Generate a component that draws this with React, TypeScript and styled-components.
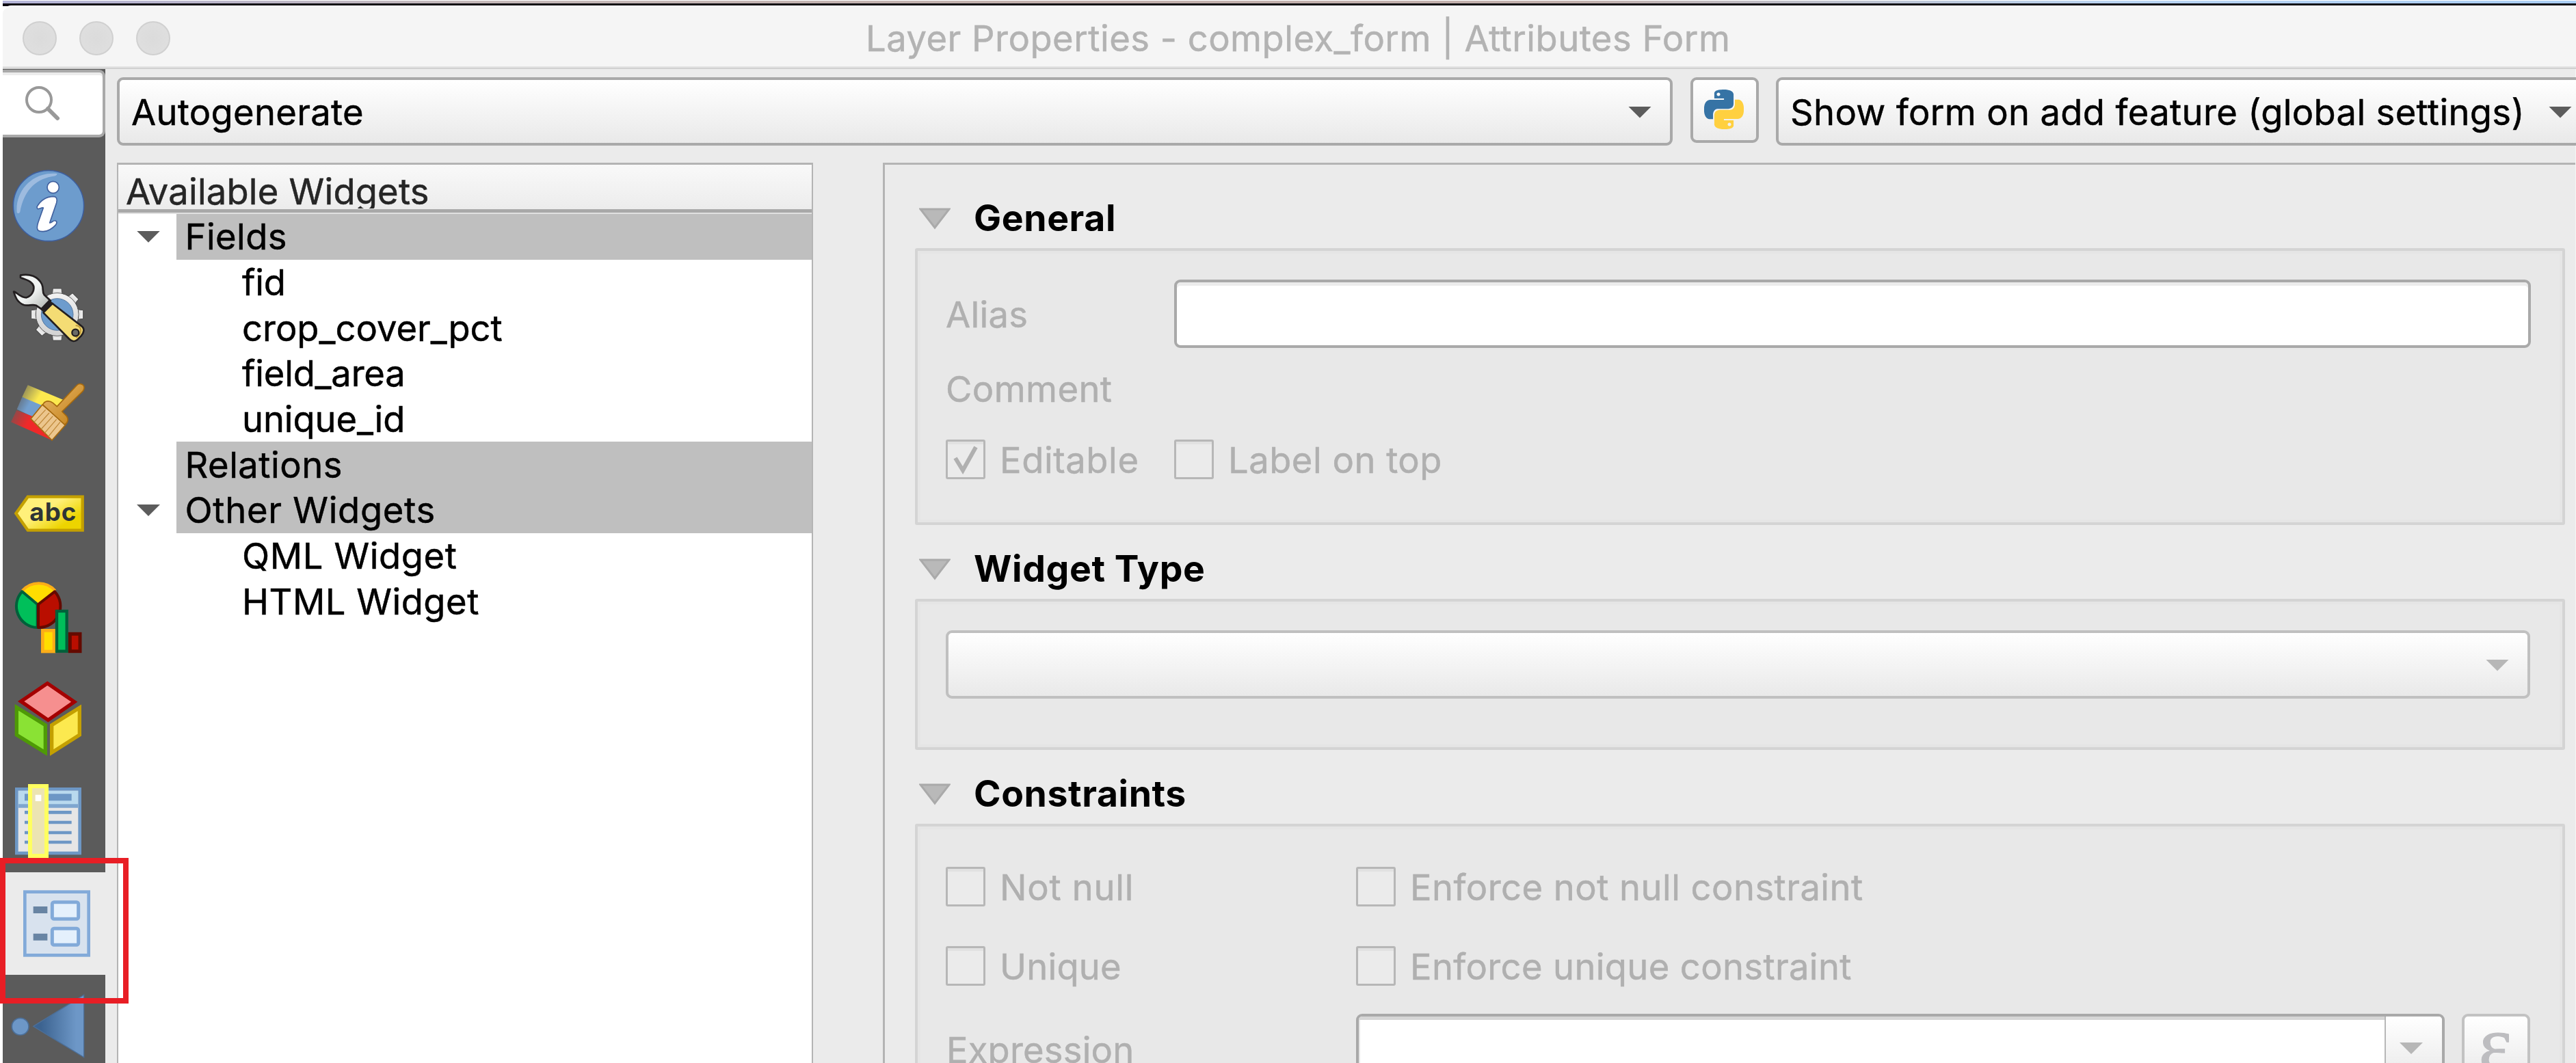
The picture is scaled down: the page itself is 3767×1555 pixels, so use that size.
import React from "react";
import styled, { createGlobalStyle } from "styled-components";

const Global = createGlobalStyle`
  html, body { margin: 0; padding: 0; background: #fff; }
  * { box-sizing: border-box; }
`;

const Screen = styled.div`
  position: relative;
  width: 3767px;
  height: 1555px;
  overflow: hidden;
  padding-left: 4px;
  background: #fff;
  font-family: Inter, "Liberation Sans", sans-serif;
  font-size: 52.5px;
  color: #000;
  display: flex;
  flex-direction: column;
  white-space: nowrap;
`;

const Desktop = styled.div`
  flex: none;
  height: 9px;
  margin-bottom: -1px;
  background: linear-gradient(#fff 0 1px, transparent 1px 5px, #0d0a12 5px),
    linear-gradient(90deg, #b3b4d8 0, #c4b8b8 700px, #c2b0ac 1500px, #c2b0ac 2300px, #b9d4f2 3100px, #a9cdf3);
`;

const TitleBar = styled.header`
  flex: none;
  height: 93px;
  display: flex;
  align-items: center;
  padding: 2px 0 0 29px;
  background: #f5f5f5;
  border-top: 2px solid #fff;
  border-bottom: 2px solid #d0d0d0;
  box-shadow: inset 0 -2px 0 #e3e3e3;
  border-radius: 12px 0 0 0;
`;

const Lights = styled.div`
  display: flex;
  gap: 33px;
  width: 1233px;
`;

const Light = styled.span`
  width: 50px;
  height: 50px;
  border-radius: 50%;
  background: radial-gradient(#dbdbdb, #e0e0e0);
  border: 2px solid #d0d0d0;
`;

const Text = styled.span<{ $ls?: number; $color?: string; $drop?: number }>`
  letter-spacing: ${(p) => p.$ls ?? 0}px;
  color: ${(p) => p.$color ?? "#000"};
  -webkit-text-stroke: 0.5px currentColor;
  line-height: 64px;
  padding-top: ${(p) => p.$drop ?? 0}px;
`;

const Body = styled.div`
  flex: 1;
  min-height: 0;
  display: flex;
`;

const Sidebar = styled.nav`
  flex: none;
  width: 150px;
  background: #5b5b5b;
`;

const SearchBox = styled.div`
  margin-top: 1px;
  margin-bottom: 25px;
  height: 99px;
  background: #fff;
  border: 4px solid #a9a9a9;
  border-left: 0;
  border-radius: 0 9px 9px 0;
  box-shadow: inset 0 4px 0 #ececec;
`;

const Slot = styled.div<{ $active?: boolean }>`
  height: 150px;
  background: ${(p) => (p.$active ? "#ebebeb" : "transparent")};
  svg { display: block; }
`;

const Content = styled.main`
  flex: 1;
  min-width: 0;
  display: flex;
  flex-direction: column;
  background: #ebebeb;
  padding: 12px 0 0 17px;
  border-right: 1px solid #f6f6f6;
`;

const TopRow = styled.div`
  flex: none;
  height: 100px;
  display: flex;
  align-items: flex-start;
`;

const Combo = styled.div<{ $w: number; $muted?: boolean }>`
  flex: none;
  width: ${(p) => p.$w}px;
  height: 100px;
  display: flex;
  align-items: center;
  justify-content: space-between;
  padding: 2px 27px 0 17px;
  border: 4px solid ${(p) => (p.$muted ? "#c0c0c0" : "#a9a9a9")};
  border-radius: 9px;
  background: linear-gradient(#fff, #e9e9e9);
`;

const Down = styled.i<{ $muted?: boolean }>`
  flex: none;
  width: 34px;
  height: 17px;
  clip-path: polygon(0 0, 100% 0, 50% 100%);
  background: ${(p) => (p.$muted ? "#b7b7b7" : "#5c5c5c")};
`;

const PyButton = styled.button`
  flex: none;
  width: 100px;
  height: 96px;
  margin: 0 25px 0 26px;
  padding: 0 2px 3px 0;
  display: grid;
  place-items: center;
  border: 4px solid #a9a9a9;
  border-radius: 9px;
  background: linear-gradient(#fff, #ebebeb);
`;

const Panes = styled.div`
  flex: 1;
  min-height: 0;
  display: flex;
  gap: 102px;
  padding-top: 25px;
`;

const Tree = styled.section`
  flex: none;
  width: 1018px;
  background: #fff;
  border: solid #b4b4b4;
  border-width: 3px 2px 0 2px;
`;

const TreeHeader = styled.div`
  height: 72px;
  padding: 7px 0 0 11px;
  overflow: hidden;
  line-height: 64px;
  border-bottom: 2px solid #e0e0e0;
  background: linear-gradient(#a9a9a9, #a9a9a9) 0 65px / 100% 5px no-repeat,
    linear-gradient(#f9f9f9, #ebebeb);
`;

const HeaderClip = styled.div`
  height: 57px;
  overflow: hidden;
`;

const Row = styled.div`
  height: 66.7px;
  display: flex;
  align-items: center;
`;

const Twisty = styled.span`
  width: 85px;
  padding: 0 0 0 27px;
  display: flex;
`;

const RowLabel = styled.div<{ $group?: boolean }>`
  flex: 1;
  height: 100%;
  display: flex;
  align-items: center;
  padding-left: ${(p) => (p.$group ? 12.5 : 96)}px;
  background: ${(p) => (p.$group ? "#bfbfbf" : "transparent")};
`;

const FormPane = styled.section`
  flex: 1;
  min-width: 0;
  padding: 46px 15px 0 44px;
  border: solid #b4b4b4;
  border-width: 3px 0 0 3px;
`;

const GroupTitle = styled.h3`
  margin: 0;
  height: 76px;
  padding-left: 6px;
  display: flex;
  align-items: flex-start;
  gap: 34px;
  font-size: 53.5px;
  font-weight: 700;
  line-height: 64px;
  letter-spacing: 0.6px;
  svg { margin-top: 17px; }
`;

const Group = styled.div<{ $h: number }>`
  height: ${(p) => p.$h}px;
  margin-bottom: 32px;
  padding: 42px 46px 0 41px;
  border: 4px solid #d4d4d4;
  border-radius: 3px;
  background: #e8e8e8;
  box-shadow: inset 0 0 0 4px #e5e5e5;
`;

const FieldRow = styled.div<{ $h: number; $col: number }>`
  height: ${(p) => p.$h}px;
  display: grid;
  grid-template-columns: ${(p) => p.$col}px 1fr;
  align-items: center;
`;

const Input = styled.div`
  height: 100px;
  background: #fff;
  border: 4px solid #a9a9a9;
  border-radius: 9px;
  box-shadow: inset 0 5px 0 #ececec;
`;

const Check = styled.label`
  display: flex;
  align-items: center;
  gap: 21px;
`;

const Box = styled.span`
  width: 58px;
  height: 58px;
  border: 3.5px solid #b7b7b7;
  border-radius: 3px;
  background: #ebebeb;
  box-shadow: inset 0 4px 0 #e1e1e1;
  svg { display: block; }
`;

const ExprRow = styled.div`
  display: grid;
  grid-template-columns: 600px 1592px 100px;
  align-items: start;
`;

const ExprLabel = styled.div`
  padding: 21px 0 0 1px;
`;

const ExprCombo = styled.div`
  height: 100px;
  display: flex;
  background: #fff;
  border: 4px solid #a9a9a9;
  border-radius: 9px;
  overflow: hidden;
`;

const ExprValue = styled.div`
  flex: 1;
  border-right: 2px solid #b7b7b7;
  box-shadow: inset 0 5px 0 #d6d6d6, inset 2px 0 0 #e6e6e6;
`;

const ExprDrop = styled.div`
  width: 82px;
  padding: 38px 0 0 20px;
  background: linear-gradient(#fff, #e9e9e9);
`;

const Epsilon = styled.button`
  width: 100px;
  height: 100px;
  margin-left: 25px;
  padding: 0 2px 12px 0;
  border: 4px solid #c2c2c2;
  border-radius: 9px;
  background: linear-gradient(#fff, #e9e9e9);
  font: 400 116px/60px "Liberation Serif", serif;
  -webkit-text-stroke: 1px currentColor;
  color: #bdbdc0;
`;

const Highlight = styled.div`
  position: absolute;
  left: 0;
  top: 1255px;
  width: 188px;
  height: 213px;
  border: 8px solid #e81e25;
`;

const MUTED = "#b0b0b0";

/* Each icon is drawn in thirds of a pixel inside its 150px slot. */
const Icon = ({ y, children }: { y: number; children: React.ReactNode }) => (
  <svg width="150" height="150" viewBox={`12 ${y} 450 450`}>{children}</svg>
);

const InfoIcon = () => (
  <Icon y={408}>
    <circle cx="213" cy="633" r="155" fill="#6d9ccd" stroke="#3e5f9e" strokeWidth="5" />
    <path d="M74 662C66 570 140 482 250 492C252 500 240 504 226 505C150 520 104 572 88 660C84 668 77 668 74 662Z" fill="#9dbbdf" />
    <circle cx="233" cy="552" r="26" fill="#fff" stroke="#41619f" strokeWidth="5" />
    <path d="M162 638C176 612 198 594 232 592C250 592 252 606 248 620L218 708C228 708 236 692 246 700C256 710 236 728 218 738C200 748 178 748 168 742C158 732 164 716 168 704L190 642C180 640 172 650 164 646Z" fill="#fff" stroke="#41619f" strokeWidth="5" strokeLinejoin="round" />
  </Icon>
);

const GearIcon = () => (
  <Icon y={858}>
    <defs>
      <linearGradient id="gear" x1="0" y1="0" x2="0" y2="1">
        <stop offset="0" stopColor="#f2f2f2" />
        <stop offset="1" stopColor="#d2d2d2" />
      </linearGradient>
      <linearGradient id="steel" x1="0" y1="0" x2="1" y2="1">
        <stop offset=".5" stopColor="#f1f4f3" />
        <stop offset="1" stopColor="#a9ada8" />
      </linearGradient>
    </defs>
    <g stroke="#4a4a4a" strokeWidth="3" fill="url(#gear)">
      {[0, 45, 90, 135, 180, 225, 270, 315].map((a) => (
        <path key={a} d="M222 1030L230 1014L232 996H270L272 1014L280 1030Z" transform={`rotate(${a} 251 1110)`} />
      ))}
      <circle cx="251" cy="1110" r="94" />
    </g>
    <circle cx="251" cy="1110" r="92" fill="url(#gear)" />
    <circle cx="251" cy="1110" r="70" fill="#6d9ccd" stroke="#56789e" strokeWidth="3" />
    <path d="M90 938C130 930 166 942 184 978C192 996 184 1010 194 1024L222 1050L184 1088L158 1070C140 1064 124 1074 104 1068C74 1056 66 1030 60 1010C76 1012 86 1036 116 1036C138 1030 150 1008 148 988C142 962 112 958 90 948Z" fill="url(#steel)" stroke="#231f20" strokeWidth="8" strokeLinejoin="round" />
    <path d="M214 1046L236 1062L196 1106L176 1086Z" fill="#231f20" />
    <path d="M230 1062L356 1160C374 1172 368 1190 356 1204L338 1222C328 1230 314 1228 304 1218L190 1102Z" fill="#f4dc74" stroke="#231f20" strokeWidth="8" strokeLinejoin="round" />
    <path d="M332 1158C352 1160 360 1176 350 1196L334 1212" fill="none" stroke="#c09a3c" strokeWidth="6" />
    <circle cx="331" cy="1190" r="15" fill="#6b6b66" stroke="#231f20" strokeWidth="7" />
  </Icon>
);

const BrushIcon = () => (
  <Icon y={48}>
    <defs>
      {[["by", "#fce94f"], ["bb", "#729fcf"], ["br", "#ef2929"]].map(([id, c]) => (
        <linearGradient key={id} id={id} x1="0" y1="0" x2="1" y2=".4">
          <stop offset="0" stopColor={c} stopOpacity=".2" />
          <stop offset=".5" stopColor={c} />
        </linearGradient>
      ))}
      <linearGradient id="wood" x1="0" y1="0" x2="1" y2="1">
        <stop offset="0" stopColor="#e9b96e" />
        <stop offset="1" stopColor="#c17d11" />
      </linearGradient>
    </defs>
    <path d="M122 160L280 226L240 280L97 212Z" fill="url(#by)" />
    <path d="M97 212L200 256L150 302L74 266Z" fill="url(#bb)" />
    <path d="M73 270L150 300L228 402L48 322Z" fill="url(#br)" />
    <path d="M186 246L288 334L228 402L135 308Z" fill="#ecc68d" stroke="#a5690f" strokeWidth="5" />
    <path d="M200 268L150 322M216 282L166 338M232 296L180 354M248 310L196 370M264 322L212 386" stroke="#c08a3c" strokeWidth="4" />
    <path d="M188 246C196 228 216 226 232 238L250 254L336 162C346 150 362 154 368 164C372 176 366 184 360 190L272 276L292 296C302 308 298 326 284 334Z" fill="url(#wood)" stroke="#a5690f" strokeWidth="5" strokeLinejoin="round" />
  </Icon>
);

const LabelIcon = () => (
  <Icon y={498}>
    <defs>
      <linearGradient id="tag" x1="0" y1="0" x2="1" y2=".8">
        <stop offset=".45" stopColor="#fff07a" />
        <stop offset=".85" stopColor="#edd400" />
      </linearGradient>
    </defs>
    <path d="M70 723L122 650H362V797H122Z" fill="url(#tag)" stroke="#c4a000" strokeWidth="13" />
    <text x="130" y="757" fontFamily="Inter, sans-serif" fontWeight="700" fontSize="110" textLength="204" fill="#2e3436">abc</text>
  </Icon>
);

const ChartIcon = () => (
  <Icon y={948}>
    <g strokeWidth="12" strokeLinejoin="round">
      <path d="M167 1122L98 1060A96 96 0 0 1 242 1060Z" fill="#ffdd00" />
      <path d="M98 1062A96 96 0 0 1 242 1062" fill="none" stroke="#fbad18" />
      <path d="M164 1122V1224A94 94 0 0 1 97 1066Z" fill="#00bf5a" stroke="#00603a" />
      <path d="M168 1122V1224A94 94 0 0 0 240 1066Z" fill="#b90e00" stroke="#640a00" />
    </g>
    <rect x="187" y="1237" width="50" height="92" fill="#ffdd00" stroke="#fbad18" strokeWidth="14" />
    <rect x="249" y="1152" width="44" height="176" fill="#00bf5a" stroke="#00603a" strokeWidth="13" />
    <rect x="307" y="1252" width="44" height="76" fill="#b90e00" stroke="#640a00" strokeWidth="15" />
  </Icon>
);

const CubeIcon = () => (
  <Icon y={48}>
    <g strokeWidth="16">
      <path d="M208 119L326 200L211 280L92 198Z" fill="#f68f8f" stroke="#a40000" />
      <path d="M73 224L199 302V423L73 345Z" fill="#8ae234" stroke="#4e9a06" />
      <path d="M349 226L227 302V423L349 345Z" fill="#fce94f" stroke="#c4a000" />
    </g>
  </Icon>
);

const TableIcon = () => (
  <Icon y={498}>
    <rect x="73" y="583" width="277" height="281" fill="#e6e6e6" stroke="#6d97c5" strokeWidth="14" />
    <rect x="81" y="591" width="261" height="60" fill="#b9d9ee" />
    <path d="M81 657H342" stroke="#7fa6cf" strokeWidth="16" />
    <path d="M108 619H314" stroke="#6d97c5" strokeWidth="30" />
    <path d="M108 685H314M108 729H314M108 774H314M108 816H314" stroke="#6d97c5" strokeWidth="14" />
    <rect x="132" y="570" width="72" height="306" fill="#ece4b2" stroke="#ffff5f" strokeWidth="18" />
    <rect x="155" y="608" width="26" height="28" fill="#fff" />
  </Icon>
);

const FormIcon = () => (
  <Icon y={168}>
    <rect x="109" y="254" width="280" height="278" fill="#d8e2ee" stroke="#82aad9" strokeWidth="14" />
    <path d="M146 333H208M146 452H208" stroke="#6884a3" strokeWidth="30" />
    <rect x="229" y="299" width="115" height="74" rx="8" fill="#e4f0fc" stroke="#82aad9" strokeWidth="15" />
    <rect x="229" y="415" width="115" height="72" rx="8" fill="#e4f0fc" stroke="#82aad9" strokeWidth="15" />
  </Icon>
);

const JoinIcon = () => (
  <Icon y={618}>
    <defs>
      <linearGradient id="cone">
        <stop offset=".15" stopColor="#3c6390" />
        <stop offset=".85" stopColor="#6d97c7" />
      </linearGradient>
    </defs>
    <circle cx="89" cy="845" r="37" fill="#6d97c7" stroke="#4c6f98" strokeWidth="5" />
    <path d="M146 844L368 706V980Z" fill="url(#cone)" stroke="#4c6f98" strokeWidth="4" />
  </Icon>
);

const PythonLogo = () => (
  <svg width="58" height="58" viewBox="0 0 24 24">
    <path fill="#3673a5" d="M14.25.18l.9.2.73.26.59.3.45.32.34.34.25.34.16.33.1.3.04.26.02.2-.01.13V8.5l-.05.63-.13.55-.21.46-.26.38-.3.31-.33.25-.35.19-.35.14-.33.1-.3.07-.26.04-.21.02H8.77l-.69.05-.59.14-.5.22-.41.27-.33.32-.27.35-.2.36-.15.37-.1.35-.07.32-.04.27-.02.21v3.06H3.17l-.21-.03-.28-.07-.32-.12-.35-.18-.36-.26-.36-.36-.35-.46-.32-.59-.28-.73-.21-.88-.14-1.05-.05-1.23.06-1.22.16-1.04.24-.87.32-.71.36-.57.4-.44.42-.33.42-.24.4-.16.36-.1.32-.05.24-.01h.16l.06.01h8.16v-.83H6.18l-.01-2.75-.02-.37.05-.34.11-.31.17-.28.25-.26.31-.23.38-.2.44-.18.51-.15.58-.12.64-.1.71-.06.77-.04.84-.02 1.27.05zm-6.3 1.98l-.23.33-.08.41.08.41.23.34.33.22.41.09.41-.09.33-.22.23-.34.08-.41-.08-.41-.23-.33-.33-.22-.41-.09-.41.09z" />
    <path fill="#ffd040" d="M21.04 6.11l.28.06.32.12.35.18.36.27.36.35.35.47.32.59.28.73.21.88.14 1.04.05 1.23-.06 1.23-.16 1.04-.24.86-.32.71-.36.57-.4.45-.42.33-.42.24-.4.16-.36.09-.32.05-.24.02-.16-.01h-8.22v.82h5.84l.01 2.76.02.36-.05.34-.11.31-.17.29-.25.25-.31.24-.38.2-.44.17-.51.15-.58.13-.64.09-.71.07-.77.04-.84.01-1.27-.04-1.07-.14-.9-.2-.73-.25-.59-.3-.45-.33-.34-.34-.25-.34-.16-.33-.1-.3-.04-.25-.02-.2.01-.13v-5.34l.05-.64.13-.54.21-.46.26-.38.3-.32.33-.24.35-.2.35-.14.33-.1.3-.06.26-.04.21-.02.13-.01h5.84l.69-.05.59-.14.5-.21.41-.28.33-.32.27-.35.2-.36.15-.36.1-.35.07-.32.04-.28.02-.21V6.07h2.09l.14.01zm-6.47 14.25l-.23.33-.08.41.08.41.23.33.33.23.41.08.41-.08.33-.23.23-.33.08-.41-.08-.41-.23-.33-.33-.23-.41-.08-.41.08z" />
  </svg>
);

const Collapse = () => (
  <svg width="46" height="32" viewBox="0 0 46 32">
    <path d="M2 2H44L23 29Z" fill="#b9b9b9" stroke="#aaa" strokeWidth="3" />
  </svg>
);

const rows: { label: string; group?: boolean; open?: boolean; ls?: number }[] = [
  { label: "Fields", group: true, open: true, ls: 0.4 },
  { label: "fid", ls: -0.2 },
  { label: "crop_cover_pct" },
  { label: "field_area", ls: -0.2 },
  { label: "unique_id", ls: -0.1 },
  { label: "Relations", group: true, ls: 0.5 },
  { label: "Other Widgets", group: true, open: true, ls: 0.7 },
  { label: "QML Widget", ls: 0.6 },
  { label: "HTML Widget", ls: 0.5 },
];

const CheckItem = ({ label, on, ls }: { label: string; on?: boolean; ls?: number }) => (
  <Check>
    <Box>
      {on && (
        <svg width="51" height="51" viewBox="0 0 51 51">
          <path d="M11 24L22 42L41 8" fill="none" stroke="#b0b0b0" strokeWidth="6" />
        </svg>
      )}
    </Box>
    <Text $color={MUTED} $ls={ls} $drop={2}>{label}</Text>
  </Check>
);

const icons = [InfoIcon, GearIcon, BrushIcon, LabelIcon, ChartIcon, CubeIcon, TableIcon, FormIcon, JoinIcon];

export default function App() {
  return (
    <Screen>
      <Global />
      <Desktop />
      <TitleBar>
        <Lights>
          <Light />
          <Light />
          <Light />
        </Lights>
        <Text $color="#b3b3b3" $ls={0.5}>Layer Properties - complex_form | Attributes Form</Text>
      </TitleBar>
      <Body>
        <Sidebar>
          <SearchBox>
            <svg width="100" height="90" viewBox="4 106 100 90">
              <circle cx="57" cy="146" r="18" fill="none" stroke="#999" strokeWidth="4" />
              <path d="M70 159L84 173" stroke="#999" strokeWidth="6" strokeLinecap="round" />
            </svg>
          </SearchBox>
          {icons.map((I, i) => (
            <Slot key={i} $active={I === FormIcon}>
              <I />
            </Slot>
          ))}
        </Sidebar>
        <Content>
          <TopRow>
            <Combo $w={2275}>
              <Text $ls={0.3}>Autogenerate</Text>
              <Down />
            </Combo>
            <PyButton>
              <PythonLogo />
            </PyButton>
            <Combo $w={1195}>
              <Text $ls={0.35}>Show form on add feature (global settings)</Text>
              <Down />
            </Combo>
          </TopRow>
          <Panes>
            <Tree>
              <TreeHeader>
                <HeaderClip>
                  <Text $color="#262626" $ls={0.2}>Available Widgets</Text>
                </HeaderClip>
              </TreeHeader>
              {rows.map((r) => (
                <Row key={r.label}>
                  <Twisty>{r.open && <Down />}</Twisty>
                  <RowLabel $group={r.group}>
                    <Text $ls={r.ls}>{r.label}</Text>
                  </RowLabel>
                </Row>
              ))}
            </Tree>
            <FormPane>
              <GroupTitle>
                <Collapse />
                General
              </GroupTitle>
              <Group $h={405}>
                <FieldRow $h={100} $col={334}>
                  <Text $color={MUTED} $ls={0.3} $drop={2}>Alias</Text>
                  <Input />
                </FieldRow>
                <FieldRow $h={119} $col={334}>
                  <Text $color={MUTED} $ls={0.4}>Comment</Text>
                </FieldRow>
                <FieldRow $h={88} $col={334}>
                  <CheckItem label="Editable" on ls={0.6} />
                  <CheckItem label="Label on top" ls={0.5} />
                </FieldRow>
              </Group>
              <GroupTitle>
                <Collapse />
                Widget Type
              </GroupTitle>
              <Group $h={221}>
                <Combo $w={2317} $muted>
                  <span />
                  <Down $muted />
                </Combo>
              </Group>
              <GroupTitle>
                <Collapse />
                Constraints
              </GroupTitle>
              <Group $h={500}>
                <FieldRow $h={92} $col={600}>
                  <CheckItem label="Not null" ls={0.7} />
                  <CheckItem label="Enforce not null constraint" ls={0.45} />
                </FieldRow>
                <FieldRow $h={140} $col={600}>
                  <CheckItem label="Unique" ls={0.2} />
                  <CheckItem label="Enforce unique constraint" ls={0.35} />
                </FieldRow>
                <ExprRow>
                  <ExprLabel>
                    <Text $color={MUTED} $ls={0.2}>Expression</Text>
                  </ExprLabel>
                  <ExprCombo>
                    <ExprValue />
                    <ExprDrop>
                      <Down $muted as="div" />
                    </ExprDrop>
                  </ExprCombo>
                  <Epsilon>ε</Epsilon>
                </ExprRow>
              </Group>
            </FormPane>
          </Panes>
        </Content>
      </Body>
      <Highlight />
    </Screen>
  );
}
